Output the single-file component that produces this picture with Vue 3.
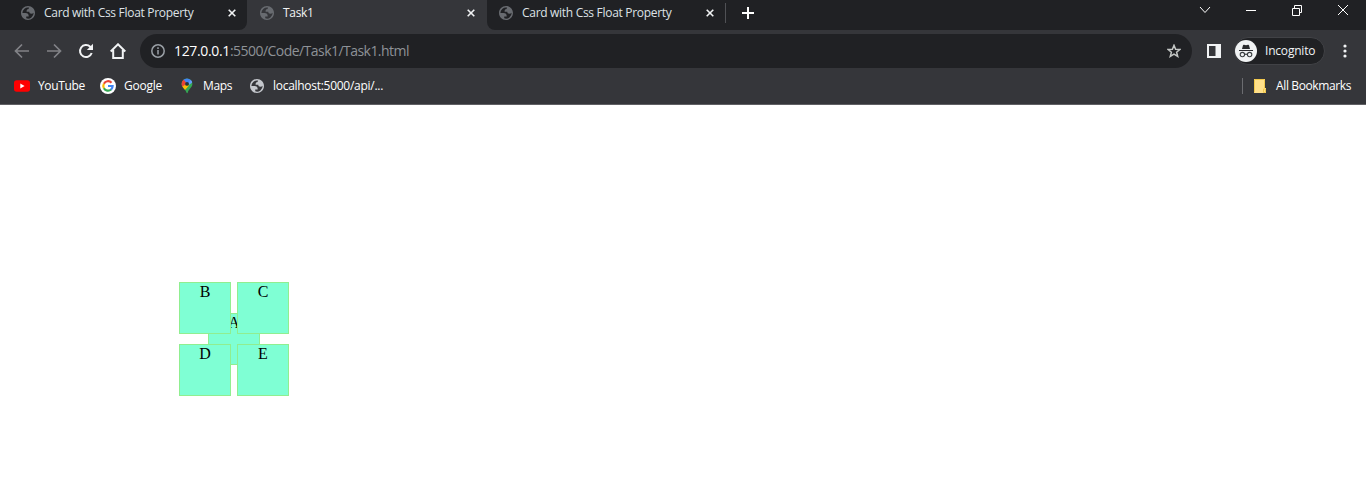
<script setup>
const tabs = [
  { title: 'Card with Css Float Property', cls: 'before' },
  { title: 'Task1', cls: 'active' },
  { title: 'Card with Css Float Property', cls: 'after' },
]
const cards = ['B', 'C', 'D', 'E']
</script>

<template>
  <div class="browser">
    <svg class="defs" width="0" height="0">
      <symbol id="globe" viewBox="2 2 20 20">
        <path fill="currentColor" fill-rule="evenodd" d="M12 2C6.480 2 2 6.480 2 12s4.480 10 10 10 10-4.480 10-10S17.520 2 12 2zM4 12h4.400c3.407.022 4.922 1.730 4.543 5.127H9.488v2.470a8.004 8.004 0 0 0 10.498-8.083C19.327 12.504 18.332 13 17 13c-2.137 0-3.206-.916-3.206-2.750h-3.748c-.274-2.728.683-4.092 2.870-4.092 0-.975.327-1.597.811-1.970A8.004 8.004 0 0 0 4 12z" />
      </symbol>
    </svg>

    <header class="strip">
      <div v-for="(t, i) in tabs" :key="i" class="tab" :class="t.cls">
        <svg class="favicon"><use href="#globe" /></svg>
        <span class="title">{{ t.title }}</span>
        <svg class="close" viewBox="0 0 8 8"><path d="M.7 .7L7.300 7.300M7.300 .7L.7 7.300" /></svg>
      </div>
      <div class="strip-end">
        <i class="tab-line"></i>
        <svg class="plus" viewBox="0 0 12 12"><path d="M6 0V12M0 6H12" /></svg>
        <div class="window-buttons">
          <svg viewBox="0 0 12 12"><path d="M1 3L6 8.500L11 3" /></svg>
          <svg viewBox="0 0 12 12"><path d="M1 6.500H11" /></svg>
          <svg viewBox="0 0 12 12"><path d="M1.500 4.500H8.500V11.500H1.500ZM3.500 4V1.500H10.500V8.500H9" /></svg>
          <svg viewBox="0 0 12 12"><path d="M1 1L11 11M11 1L1 11" /></svg>
        </div>
      </div>
    </header>

    <div class="toolbar">
      <svg class="nav dim" viewBox="0 0 16 16"><path d="M15 8H2M8 1.500L1.500 8L8 14.500" /></svg>
      <svg class="nav dim" viewBox="0 0 16 16"><path d="M1 8H14M8 1.500L14.500 8L8 14.500" /></svg>
      <svg class="nav" viewBox="0 0 16 16"><path d="M13.700 10A6 6 0 1 1 12.200 3.700L13.500 5" /><path d="M15 .8V7H8.800Z" fill="currentColor" stroke="none" /></svg>
      <svg class="nav" viewBox="0 0 16 16"><path d="M.7 8.500L8 1.300L15.300 8.500M3.200 7V15H12.800V7" /></svg>
      <div class="address">
        <svg class="info" viewBox="0 0 14 14"><circle cx="7" cy="7" r="6.200" /><path d="M7 6V10.500M7 3.300V4.900" /></svg>
        <span class="url"><b>127.0.0.1</b>:5500/Code/Task1/Task1.html</span>
        <svg class="star" viewBox="0 0 14 14"><path d="M7 1.300L8.600 5.200L12.900 5.500L9.600 8.200L10.700 12.400L7 10.100L3.300 12.400L4.400 8.200L1.100 5.500L5.400 5.200Z" /></svg>
      </div>
      <svg class="panel" viewBox="0 0 14 14"><path d="M0 0H14V14H0ZM2 2V12H8.500V2Z" fill-rule="evenodd" /></svg>
      <div class="profile">
        <svg class="spy" viewBox="0 0 22 22">
          <circle cx="11" cy="11" r="11" fill="#f1f3f4" />
          <path d="M7 9L8 5.200Q8.300 4.500 9 4.800L11 5.200L13 4.800Q13.700 4.500 14 5.200L15 9ZM4 10H18V11H4Z" fill="#292a2d" />
          <g fill="none" stroke="#3c4043" stroke-width="1.100"><circle cx="7.400" cy="14.600" r="2.200" /><circle cx="14.600" cy="14.600" r="2.200" /><path d="M9.600 14.500Q11 13.800 12.400 14.500" /></g>
        </svg>
        <span>Incognito</span>
      </div>
      <svg class="dots" viewBox="0 0 4 14"><circle cx="2" cy="2" r="1.600" /><circle cx="2" cy="7" r="1.600" /><circle cx="2" cy="12" r="1.600" /></svg>
    </div>

    <nav class="bookmarks">
      <a class="mark youtube">
        <svg viewBox="0 0 16 16"><rect y="2.300" width="16" height="11.500" rx="2.700" fill="#f00" /><path d="M6.300 5.600V10.500L10.600 8Z" fill="#fff" /></svg>
        <span>YouTube</span>
      </a>
      <a class="mark google">
        <svg viewBox="0 0 16 16">
          <circle cx="8" cy="8" r="8" fill="#fff" />
          <g fill="none" stroke-width="2.200">
            <path d="M11.500 4.700A4.700 4.700 0 0 0 3.900 5.800" stroke="#ea4335" />
            <path d="M3.900 5.700A4.700 4.700 0 0 0 3.900 10.300" stroke="#fbbc05" />
            <path d="M3.900 10.200A4.700 4.700 0 0 0 11.100 11.500" stroke="#34a853" />
            <path d="M11 11.600A4.700 4.700 0 0 0 12.600 8H8" stroke="#4285f4" />
          </g>
        </svg>
        <span>Google</span>
      </a>
      <a class="mark maps">
        <svg viewBox="0 0 16 16">
          <clipPath id="pin"><path d="M8 .5A5.400 5.400 0 0 1 13.400 5.900C13.400 9.300 9.500 10.800 8.800 14.500Q8.300 15.800 7.400 14.500C6.500 11 2.600 9.300 2.600 5.900A5.400 5.400 0 0 1 8 .5Z" /></clipPath>
          <g clip-path="url(#pin)"><rect width="16" height="16" fill="#34a853" /><path d="M2 0H16V3L8 6L4 2Z" fill="#4285f4" /><path d="M2 1.500L4.500 1.500L8 5.500L3.500 10L2 7Z" fill="#ea4335" /><path d="M2 9.500L8 5.500L10 7.500L5 13Z" fill="#fbbc04" /><path d="M10 4L13 1L14 4L10 7Z" fill="#669df6" /></g>
          <circle cx="8" cy="5.900" r="1.900" fill="#263238" />
        </svg>
        <span>Maps</span>
      </a>
      <a class="mark local">
        <svg class="bright"><use href="#globe" x="1" y="1" width="14" height="14" /></svg>
        <span>localhost:5000/api/...</span>
      </a>
      <i class="divider"></i>
      <svg class="folder" viewBox="0 0 12 14"><path d="M0 0H11V9H12V14H0Z" fill="#ffe08a" /><path d="M.5 13.500V.5H10.500V9M9.500 13.500V10H11.500V13.500Z" fill="none" stroke="#f2c94c" /></svg>
      <span class="all">All Bookmarks</span>
    </nav>

    <main class="page">
      <div class="cluster">
        <div class="card center">A</div>
        <div v-for="c in cards" :key="c" class="card">{{ c }}</div>
      </div>
    </main>
  </div>
</template>

<style>
body { margin: 0; overflow: hidden; background: #fff; }
</style>

<style scoped>
* { box-sizing: border-box; }
.browser { height: 477px; display: flex; flex-direction: column; font: 12px/16px "Open Sans", "Noto Sans", sans-serif; color: #f1f3f4; background: #fff; }
svg { display: block; flex: none; }
span { white-space: nowrap; }
.defs { position: absolute; }
.strip { height: 30px; flex: none; display: flex; padding-left: 8px; background: linear-gradient(90deg, #202124 8px, #35363a 8px); }
.tab { width: 239px; height: 30px; display: flex; align-items: center; padding: 0 11px 4px 13px; color: #dee1e6; background: #202124; }
.before { border-bottom-right-radius: 8px; }
.after { width: 238px; margin-left: 1px; padding-left: 12px; border-bottom-left-radius: 8px; }
.active { background: #35363a; color: #f1f3f4; }
.favicon { width: 14px; height: 14px; color: #686b70; margin-right: 9px; }
.title { flex: 1; letter-spacing: -.3px; }
.close { width: 8px; height: 8px; stroke: #f1f3f4; stroke-width: 1.6; }
.strip-end { flex: 1; display: flex; background: #202124; }
.tab-line { width: 1px; height: 20px; margin-top: 3px; background: #505155; }
.plus { width: 12px; height: 12px; margin: 7px 0 0 16px; stroke: #fff; stroke-width: 2; }
.window-buttons { display: flex; gap: 34px; margin: 4px 17px 0 auto; }
.window-buttons svg { width: 12px; height: 12px; fill: none; stroke: #fff; stroke-width: 1; }
.toolbar { height: 38px; flex: none; display: flex; align-items: center; padding: 4px 19px 0 14px; background: #35363a; }
.nav { width: 16px; height: 16px; margin-right: 16px; color: #f1f3f4; fill: none; stroke: currentColor; stroke-width: 2; }
.dim { color: #828387; stroke-width: 1.7; }
.address { height: 34px; width: 1052px; margin-left: -2px; display: flex; align-items: center; border-radius: 17px; padding: 0 11px; background: #202124; }
.info { width: 14px; height: 14px; margin-right: 9px; fill: none; stroke: #9aa0a6; stroke-width: 1.5; }
.url { flex: 1; font-size: 14px; line-height: 20px; letter-spacing: -.54px; color: #8e9297; }
.url b { font-weight: 400; letter-spacing: -.35px; color: #fff; }
.star { width: 14px; height: 14px; fill: none; stroke: #c4c7c5; stroke-width: 1.5; }
.panel { width: 14px; height: 14px; margin: 0 13px 0 15px; fill: #f1f3f4; }
.profile { width: 91px; height: 28px; display: flex; align-items: center; gap: 8px; border: 1px solid #414246; border-radius: 14px; background: #202124; letter-spacing: -.2px; }
.spy { width: 22px; height: 22px; }
.dots { width: 4px; height: 14px; margin-left: auto; fill: #f1f3f4; }
.bookmarks { height: 37px; flex: none; display: flex; align-items: center; padding: 0 15px 0 14px; background: #35363a; border-bottom: 1px solid #606064; color: #fff; letter-spacing: -.37px; }
.mark { display: flex; align-items: center; gap: 8px; }
.mark svg { width: 16px; height: 16px; }
.youtube { width: 86px; }
.google { width: 79px; letter-spacing: -.25px; }
.maps { width: 70px; }
.local { letter-spacing: -.28px; }
.bright { color: #c4c7cc; }
.divider { width: 1px; height: 16px; margin-left: auto; background: #6b6c70; }
.folder { width: 12px; height: 14px; margin: 0 10px 0 11px; }
.all { width: 75px; }
.page { flex: 1; padding: 177px 0 0 179px; }
.cluster { position: relative; display: grid; grid-template-columns: 52px 52px; gap: 10px 6px; width: 110px; }
.card { position: relative; width: 52px; height: 52px; border: 1px solid lightgreen; background: aquamarine; color: #000; font: 16px/18px "Liberation Serif", serif; text-align: center; }
.center { position: absolute; left: 29px; top: 31px; }
</style>
